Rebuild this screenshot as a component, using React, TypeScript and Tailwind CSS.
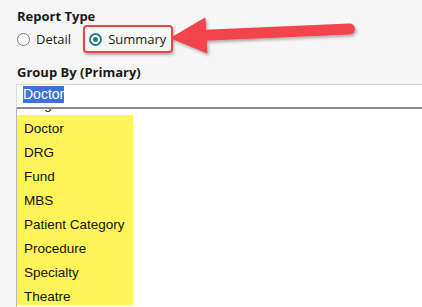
import React from 'react';

const GROUP_OPTIONS = ['Diagnosis', 'Doctor', 'DRG', 'Fund', 'MBS', 'Patient Category', 'Procedure', 'Specialty', 'Theatre'];

const labelFont = { fontFamily: '"Open Sans", "Noto Sans", sans-serif' };
const listFont = { fontFamily: '"Liberation Sans", Arial, sans-serif' };

// Callout arrow drawn over the form, pointing at the Summary option
const CalloutArrow = () => (
  <svg className="absolute left-0 top-0 pointer-events-none" width="422" height="80" viewBox="0 0 422 80">
    <defs>
      <filter id="arrowShadow" x="-10%" y="-30%" width="120%" height="160%">
        <feDropShadow dx="1.5" dy="2" stdDeviation="1.5" floodColor="#000" floodOpacity="0.3" />
      </filter>
    </defs>
    <g filter="url(#arrowShadow)" fill="#f1454b" stroke="#f1454b">
      <line x1="200" y1="35.5" x2="349.5" y2="29" strokeWidth="11" strokeLinecap="round" />
      <polygon points="171,38 205,18 207,53" strokeWidth="1" strokeLinejoin="round" />
    </g>
  </svg>
);

export default function App() {
  return (
    <div className="relative w-[422px] h-[307px] bg-[#f6f6f6] overflow-hidden flex flex-col text-[#1a1a1a]">
      <div className="pl-[17px] pt-[7px]" style={labelFont}>
        <div className="h-[18px] leading-[18px] text-[13px] font-bold">Report Type</div>

        {/* Report type radios */}
        <div className="h-[28px] flex items-center">
          <div className="flex items-center">
            <span className="w-[13px] h-[13px] rounded-full border border-[#7a7a7a] bg-white"></span>
            <span className="ml-[6px] text-[13px] leading-[18px]">Detail</span>
          </div>
          <div className="ml-[12px] h-[28px] flex items-center pl-[4px] pr-[5px] border-2 border-[#ee4049] rounded-[4px] shadow-[1px_2px_3px_rgba(0,0,0,0.3)]">
            <span className="w-[13px] h-[13px] rounded-full border-2 border-[#1f7b88] bg-white flex items-center justify-center">
              <span className="w-[5px] h-[5px] rounded-full bg-[#1f7b88]"></span>
            </span>
            <span className="ml-[6px] text-[13px] leading-[18px]">Summary</span>
          </div>
        </div>

        <div className="mt-[10px] mb-[3px] h-[18px] leading-[18px] text-[13px] font-bold">Group By (Primary)</div>
      </div>

      {/* Select input */}
      <div className="ml-[16px] h-[25px] bg-white border-t border-l border-[#d9d9d9] border-b-2 border-b-[#8a8a8a] flex items-center pl-[6px]" style={listFont}>
        <span className="bg-[#3b73d8] text-white text-[14px] leading-[17px] h-[17px] -mt-[3px]">Doctor</span>
      </div>

      {/* Dropdown list, scrolled so Diagnosis sits under the input */}
      <div className="ml-[16px] flex-1 bg-white border-l border-[#b8b8b8] overflow-hidden" style={listFont}>
        <div className="-mt-[16px]">
          <div className="h-[22px] leading-[24px] pl-[7px] text-[13.5px] text-[#111]">{GROUP_OPTIONS[0]}</div>
          <div className="w-[116px] h-[190px] pt-[2px] bg-[#fff55a] overflow-hidden">
            {GROUP_OPTIONS.slice(1).map((opt) => (
              <div key={opt} className="h-[24px] leading-[24px] pl-[7px] text-[13.5px] text-[#111]">
                {opt}
              </div>
            ))}
          </div>
        </div>
      </div>

      <CalloutArrow />
    </div>
  );
}
